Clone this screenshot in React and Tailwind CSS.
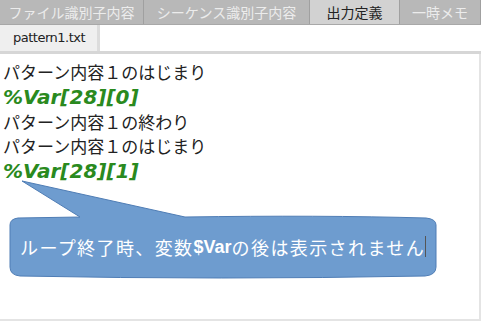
import React from 'react';

const tabs = [
  { label: 'ファイル識別子内容', w: 'w-[144px]', active: false },
  { label: 'シーケンス識別子内容', w: 'w-[166px]', active: false },
  { label: '出力定義', w: 'w-[90px]', active: true },
  { label: '一時メモ', w: 'flex-1', active: false },
];

const jp = "font-['Noto_Sans_CJK_JP',sans-serif]";

export default function App() {
  return (
    <div className={`w-[481px] h-[321px] bg-white flex flex-col overflow-hidden ${jp}`}>
      {/* Top tabs */}
      <div className="h-[25px] flex bg-[#b8b8b8] border-b border-[#a8a8a8]">
        {tabs.map((t) => (
          <div
            key={t.label}
            className={`${t.w} flex items-center justify-center border-r border-[#a0a0a0] text-[14px] leading-none ${
              t.active ? 'bg-[#d2d2d2] text-[#222]' : 'text-[#ececec]'
            }`}
          >
            {t.label}
          </div>
        ))}
      </div>

      {/* File tab row */}
      <div className="h-[29px] flex border-b-[3px] border-[#d6d6d6]">
        <div className="w-[100px] bg-[#efefef] border-r-[3px] border-[#dcdcdc] flex items-center pl-[13px] text-[13px] text-[#222] font-['DejaVu_Sans',sans-serif] tracking-[-0.5px]">
          pattern1.txt
        </div>
        <div className="flex-1 bg-white" />
      </div>

      {/* Editor */}
      <div className="relative flex-1 border-r-[2px] border-b-[2px] border-[#e4e4e4]">
        <div className="pl-[3px] pt-[6px] text-[17px] leading-[24px] text-[#222]">
          <div>パターン内容１のはじまり</div>
          <div className="font-['DejaVu_Sans',sans-serif] font-bold italic text-[20px] leading-[26px] text-[#2a8a1e]">%Var[28][0]</div>
          <div>パターン内容１の終わり</div>
          <div>パターン内容１のはじまり</div>
          <div className="font-['DejaVu_Sans',sans-serif] font-bold italic text-[20px] leading-[26px] text-[#2a8a1e]">%Var[28][1]</div>
        </div>

        {/* Callout */}
        <svg className="absolute left-0 top-0" width="481" height="266" viewBox="0 57 481 266">
          <path
            d="M22 184 L80 220 L18 221 Q10 222 10 228 L10 270 Q10 278 20 279 Q220 283 425 279 Q436 278 436 270 L436 228 Q436 222 426 221 Q320 218 185 220 Z"
            fill="#6e9ccf"
            stroke="#4f7db5"
            strokeWidth="1"
          />
        </svg>
        <div className="absolute left-[20px] top-[182px] flex items-center text-[18px] tracking-[1.4px] text-white leading-none">
          <span>ループ終了時、変数</span>
          <span className="font-['Liberation_Sans',sans-serif] font-bold tracking-normal">$Var</span>
          <span>の後は表示されません</span>
          <span className="w-px h-[21px] bg-[#555]" />
        </div>
      </div>
    </div>
  );
}
